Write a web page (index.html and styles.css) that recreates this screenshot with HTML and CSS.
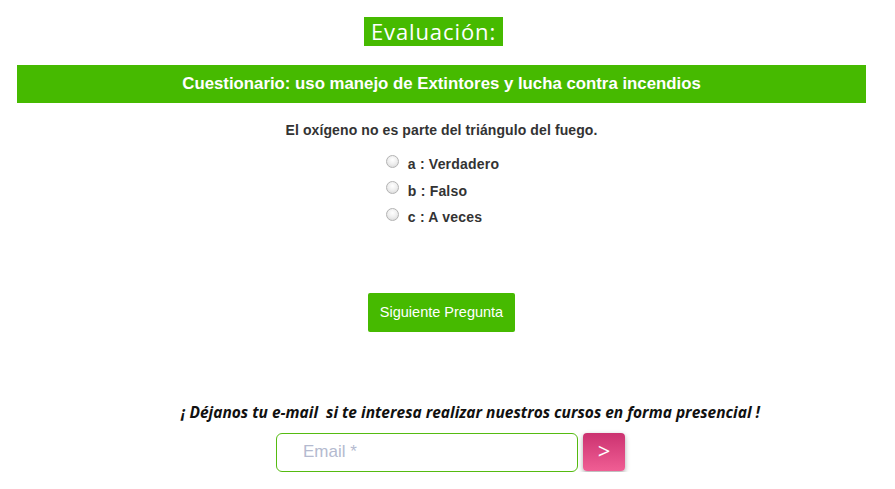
FILE: index.html
```html
<!DOCTYPE html>
<html lang="es">
<head>
<meta charset="utf-8">
<title>Evaluación</title>
<link rel="stylesheet" href="styles.css">
</head>
<body>
<div class="page">
  <div class="title-row"><h1 class="title">Evaluación:</h1></div>
  <div class="bar">Cuestionario: uso manejo de Extintores y lucha contra incendios</div>
  <div class="quiz">
    <p class="question">El oxígeno no es parte del triángulo del fuego.</p>
    <div class="options">
      <label class="option"><span class="radio"></span>a : Verdadero</label>
      <label class="option"><span class="radio"></span>b : Falso</label>
      <label class="option"><span class="radio"></span>c : A veces</label>
    </div>
    <button class="next">Siguiente Pregunta</button>
  </div>
  <div class="subscribe">
    <p class="invite">¡ Déjanos tu e-mail &nbsp;si te interesa realizar nuestros cursos en forma presencial !</p>
    <form class="email-row">
      <input class="email" type="text" placeholder="Email *">
      <button class="send" type="button">&gt;</button>
    </form>
  </div>
</div>
</body>
</html>
```
FILE: styles.css
```css
* { box-sizing: border-box; }
html, body { margin: 0; padding: 0; background: #fff; }
body { font-family: "Liberation Sans", Arial, sans-serif; color: #333; }
.page { width: 883px; padding: 17px 0 0 17px; }
.title-row { display: flex; justify-content: center; margin-left: -17px; padding-right: 16px; }
.title {
  margin: 0;
  background: #46ba00;
  color: #fff;
  font-family: "Open Sans", sans-serif;
  font-weight: 400;
  font-size: 22px;
  line-height: 29px;
  height: 29px;
  padding: 0 7px 0 7px;
  letter-spacing: 0.9px;
}
.bar {
  margin-top: 19px;
  width: 849px;
  height: 38px;
  background: #46ba00;
  color: #fff;
  font-weight: 700;
  font-size: 16.8px;
  line-height: 37px;
  text-align: center;
}
.quiz { width: 849px; display: flex; flex-direction: column; align-items: center; }
.question { margin: 19px 0 0; font-size: 14px; font-weight: 700; line-height: 16px; color: #333; letter-spacing: 0.1px; }
.options { display: flex; flex-direction: column; align-items: flex-start; margin-top: 13px; margin-left: 2px; }
.option { display: flex; align-items: center; font-size: 14px; font-weight: 700; height: 26.5px; color: #333; letter-spacing: 0.2px; }
.radio {
  width: 13px; height: 13px; border-radius: 50%;
  border: 1px solid #b3b3b3;
  background: radial-gradient(circle at 50% 35%, #fff 0%, #eee 50%, #d3d3d3 100%);
  margin-right: 9px;
  position: relative; top: -3px;
}
.next {
  margin-top: 62px;
  width: 147px; height: 39px;
  background: #46ba00; color: #fff; border: none; border-radius: 2px;
  font-family: "Liberation Sans", Arial, sans-serif; font-size: 14.5px;
}
.subscribe { width: 883px; margin-left: -17px; display: flex; flex-direction: column; align-items: center; }
.invite {
  margin: 70px 0 0 58px;
  font-family: "Open Sans", sans-serif; font-style: italic; font-weight: 700;
  font-size: 15.5px; line-height: 21px; color: #111;
}
.email-row { display: flex; gap: 5px; margin: 10px 0 0 18px; }
.email {
  width: 302px; height: 39px;
  border: 1px solid #55bb11; border-radius: 6px;
  padding: 0 0 0 26px;
  font-family: "Liberation Sans", Arial, sans-serif; font-size: 17px; color: #333;
  outline: none;
}
.email::placeholder { color: #b4bacf; }
.send {
  width: 42px; height: 38px;
  border: none; border-radius: 4px;
  background: linear-gradient(#cb3270, #f05e94);
  color: #fff; font-size: 22px; font-family: "Open Sans", sans-serif;
  box-shadow: 0 2px 5px rgba(0,0,0,0.35);
  padding: 0 0 3px;
}
```
